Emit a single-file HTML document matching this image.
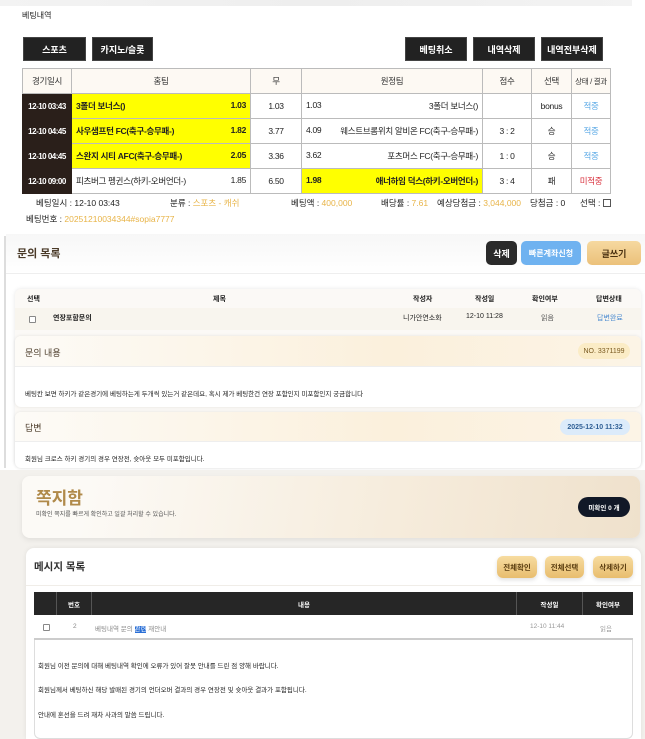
<!DOCTYPE html><html><head><meta charset="utf-8"><style>
*{margin:0;padding:0;box-sizing:border-box}
body{width:645px;height:739px;position:relative;overflow:hidden;background:#fff;font-family:"Liberation Sans","Noto Sans CJK KR",sans-serif;color:#222}
.a{position:absolute}
.btn{position:absolute;background:#222;color:#fff;font-size:9px;font-weight:bold;display:flex;align-items:center;justify-content:center;border:1px solid #444}
table{border-collapse:collapse}
.t1{position:absolute;left:22px;top:68px;width:588px;font-size:8.5px;table-layout:fixed;letter-spacing:-0.3px}
.t1 td,.t1 th{border:1px solid #bbb;height:25px;padding:0 4px;white-space:nowrap;overflow:hidden}
.t1 th{background:#fdf9f3;font-weight:normal;color:#333;text-align:center;padding:0 1px}
.t1 .d{background:#2a1f1a;color:#fff;font-weight:bold;padding:0;text-align:center;border-color:#2a1f1a;font-size:8px;letter-spacing:-0.5px}
.f{display:flex;justify-content:space-between;white-space:nowrap}
.y{background:#ffff00;font-weight:bold}
.c{text-align:center}
.gold{color:#e8b448}
.gb{position:absolute;border-radius:6px;background:linear-gradient(#f7dca0,#e8bd6e);color:#5a3d10;font-size:7.5px;font-weight:bold;display:flex;align-items:center;justify-content:center;box-shadow:0 2px 4px rgba(0,0,0,.12)}
</style></head><body>
<div class="a" style="left:0;top:0;width:632px;height:6px;background:linear-gradient(90deg,#f3f3f3,#eee 50%,#f3f3f3)"></div>
<div class="a" style="left:22px;top:10px;font-size:8px">베팅내역</div>
<div class="btn" style="left:23px;top:37px;width:63px;height:24px">스포츠</div>
<div class="btn" style="left:92px;top:37px;width:61px;height:24px">카지노/슬롯</div>
<div class="btn" style="left:405px;top:37px;width:62px;height:24px">베팅취소</div>
<div class="btn" style="left:473px;top:37px;width:62px;height:24px">내역삭제</div>
<div class="btn" style="left:541px;top:37px;width:62px;height:24px">내역전부삭제</div>
<table class="t1">
<colgroup><col style="width:49px"><col style="width:179px"><col style="width:51px"><col style="width:181px"><col style="width:49px"><col style="width:40px"><col style="width:39px"></colgroup>
<tr><th>경기일시</th><th>홈팀</th><th>무</th><th>원정팀</th><th>점수</th><th>선택</th><th style="font-size:7.5px">상태 / 결과</th></tr>
<tr><td class="d">12-10 03:43</td><td class="y"><div class="f"><span>3폴더 보너스()</span><span>1.03</span></div></td><td class="c">1.03</td><td><div class="f"><span>1.03</span><span>3폴더 보너스()</span></div></td><td></td><td class="c">bonus</td><td class="c" style="color:#5aa9e6">적중</td></tr>
<tr><td class="d">12-10 04:45</td><td class="y"><div class="f"><span>사우샘프턴 FC(축구-승무패-)</span><span>1.82</span></div></td><td class="c">3.77</td><td><div class="f"><span>4.09</span><span>웨스트브롬위치 알비온 FC(축구-승무패-)</span></div></td><td class="c">3 : 2</td><td class="c">승</td><td class="c" style="color:#5aa9e6">적중</td></tr>
<tr><td class="d">12-10 04:45</td><td class="y"><div class="f"><span>스완지 시티 AFC(축구-승무패-)</span><span>2.05</span></div></td><td class="c">3.36</td><td><div class="f"><span>3.62</span><span>포츠머스 FC(축구-승무패-)</span></div></td><td class="c">1 : 0</td><td class="c">승</td><td class="c" style="color:#5aa9e6">적중</td></tr>
<tr><td class="d">12-10 09:00</td><td><div class="f"><span>피츠버그 펭귄스(하키-오버언더-)</span><span>1.85</span></div></td><td class="c">6.50</td><td class="y"><div class="f"><span>1.98</span><span>애너하임 덕스(하키-오버언더-)</span></div></td><td class="c">3 : 4</td><td class="c">패</td><td class="c" style="color:#d9333f">미적중</td></tr>
</table>
<div class="a" style="top:197px;left:36px;font-size:8.5px;white-space:nowrap">베팅일시 : 12-10 03:43</div>
<div class="a" style="top:197px;left:170px;font-size:8.5px">분류 : <span class="gold">스포츠 - 캐쉬</span></div>
<div class="a" style="top:197px;left:291px;font-size:8.5px">베팅액 : <span class="gold">400,000</span></div>
<div class="a" style="top:197px;left:381px;font-size:8.5px">배당률 : <span class="gold">7.61</span></div>
<div class="a" style="top:197px;left:437px;font-size:8.5px;white-space:nowrap">예상당첨금 : <span class="gold">3,044,000</span></div>
<div class="a" style="top:197px;left:530px;font-size:8.5px">당첨금 : 0</div>
<div class="a" style="top:197px;left:580px;font-size:8.5px">선택 : <span style="display:inline-block;width:8px;height:8px;border:1px solid #555;vertical-align:-1px"></span></div>
<div class="a" style="top:213px;left:26px;font-size:8.5px">베팅번호 : <span class="gold">20251210034344#sopia7777</span></div>

<div class="a" style="left:0;top:233px;width:645px;height:237px;background:#fff"></div>
<div class="a" style="left:4px;top:236px;width:2px;height:232px;background:#ddd"></div>
<div class="a" style="left:6px;top:234px;width:639px;height:40px;background:linear-gradient(#f7f7f7,#fff)"></div>
<div class="a" style="left:17px;top:245px;font-size:11px;font-weight:bold;color:#4a3a28">문의 목록</div>
<div class="a" style="left:486px;top:241px;width:31px;height:24px;background:#2a2a2a;color:#fff;border-radius:5px;font-size:9px;font-weight:bold;display:flex;align-items:center;justify-content:center">삭제</div>
<div class="a" style="left:521px;top:241px;width:60px;height:24px;background:#6fb2f0;color:#fff;border-radius:5px;font-size:8px;font-weight:bold;display:flex;align-items:center;justify-content:center">빠른계좌신청</div>
<div class="a" style="left:587px;top:241px;width:54px;height:24px;background:linear-gradient(#f6d9a0,#ebc17a);color:#4a3010;border-radius:5px;font-size:9px;font-weight:bold;display:flex;align-items:center;justify-content:center">글쓰기</div>
<div class="a" style="left:6px;top:273px;width:639px;height:1px;background:#eee"></div>
<div class="a" style="left:15px;top:289px;width:626px;height:178px;border-radius:6px;background:#fbf9f6;box-shadow:0 0 4px rgba(0,0,0,.1)"></div>
<div class="a" style="top:294px;left:27px;font-size:7px;font-weight:bold">선택</div>
<div class="a" style="top:294px;left:213px;font-size:7px;font-weight:bold">제목</div>
<div class="a" style="top:294px;left:413px;font-size:7px;font-weight:bold">작성자</div>
<div class="a" style="top:294px;left:475px;font-size:7px;font-weight:bold">작성일</div>
<div class="a" style="top:294px;left:532px;font-size:7px;font-weight:bold">확인여부</div>
<div class="a" style="top:294px;left:596px;font-size:7px;font-weight:bold">답변상태</div>
<div class="a" style="left:15px;top:308px;width:626px;height:22px;background:#f8f5ee"></div>
<div class="a" style="top:316px;left:29px;width:7px;height:7px;border:1px solid #888;border-radius:1px;background:#fff"></div>
<div class="a" style="top:313px;left:53px;font-size:7px;font-weight:bold">연장포함문의</div>
<div class="a" style="top:313px;left:403px;font-size:7px">니가안연소화</div>
<div class="a" style="top:313px;left:466px;font-size:7px">12-10 11:28</div>
<div class="a" style="top:313px;left:541px;font-size:7px;color:#555">읽음</div>
<div class="a" style="top:313px;left:597px;font-size:7px;color:#4a8ad0">답변완료</div>
<div class="a" style="left:15px;top:336px;width:626px;height:71px;border-radius:6px;background:#fff;box-shadow:0 0 3px rgba(0,0,0,.1)"></div>
<div class="a" style="left:15px;top:336px;width:626px;height:31px;border-radius:6px 6px 0 0;background:linear-gradient(90deg,#fdfbf7,#fbf0dc 60%,#fcf4e6);border-bottom:1px solid #eee"></div>
<div class="a" style="top:346px;left:25px;font-size:9px;color:#4a3a28">문의 내용</div>
<div class="a" style="top:343px;left:578px;width:52px;height:16px;border-radius:8px;background:#fbecc6;color:#7a5a20;font-size:7px;display:flex;align-items:center;justify-content:center">NO. 3371199</div>
<div class="a" style="top:388px;left:25px;font-size:6.5px;white-space:nowrap">베팅칸 보면 하키가 같은경기에 베팅하는게 두개씩 있는거 같은데요, 혹시 제가 베팅한건 연장 포함인지 미포함인지 궁금합니다</div>
<div class="a" style="left:15px;top:412px;width:626px;height:56px;border-radius:6px;background:#fff;box-shadow:0 0 3px rgba(0,0,0,.1)"></div>
<div class="a" style="left:15px;top:412px;width:626px;height:30px;border-radius:6px 6px 0 0;background:linear-gradient(90deg,#fdfbf7,#fbf0dc 60%,#fcf4e6);border-bottom:1px solid #eee"></div>
<div class="a" style="top:421px;left:25px;font-size:9px;color:#4a3a28">답변</div>
<div class="a" style="top:419px;left:560px;width:70px;height:16px;border-radius:8px;background:#dcebfa;color:#2f5f95;font-size:7px;font-weight:bold;display:flex;align-items:center;justify-content:center">2025-12-10 11:32</div>
<div class="a" style="top:453px;left:25px;font-size:6.5px;white-space:nowrap">회원님 크로스 하키 경기의 경우 연장전, 슛아웃 모두 미포함입니다.</div>

<div class="a" style="left:0;top:470px;width:645px;height:269px;background:#f3f1ed"></div>
<div class="a" style="left:22px;top:476px;width:618px;height:62px;border-radius:8px;background:linear-gradient(100deg,#fcfaf6 10%,#f6ecdc 60%,#efe1cc);box-shadow:0 2px 6px rgba(0,0,0,.08)"></div>
<div class="a" style="left:36px;top:490px;font-size:17px;font-weight:bold;color:#b08a4a;line-height:18px">쪽지함</div>
<div class="a" style="left:36px;top:509px;font-size:6px;color:#555;white-space:nowrap">미확인 쪽지를 빠르게 확인하고 일괄 처리할 수 있습니다.</div>
<div class="a" style="left:578px;top:497px;width:52px;height:20px;border-radius:10px;background:#111827;color:#fff;font-size:6.5px;font-weight:bold;display:flex;align-items:center;justify-content:center">미확인 0 개</div>
<div class="a" style="left:26px;top:548px;width:615px;height:191px;border-radius:8px 8px 0 0;background:#fff;box-shadow:0 0 5px rgba(0,0,0,.08)"></div>
<div class="a" style="left:26px;top:585px;width:615px;height:1px;background:#f0ede8"></div>
<div class="a" style="left:34px;top:559px;font-size:10.5px;font-weight:bold;color:#333">메시지 목록</div>
<div class="gb" style="left:497px;top:556px;width:40px;height:22px">전체확인</div>
<div class="gb" style="left:545px;top:556px;width:39px;height:22px">전체선택</div>
<div class="gb" style="left:593px;top:556px;width:40px;height:22px">삭제하기</div>
<div class="a" style="left:34px;top:592px;width:599px;height:23px;background:#262626"></div>
<div class="a" style="left:56px;top:592px;width:1px;height:23px;background:#555"></div>
<div class="a" style="left:91px;top:592px;width:1px;height:23px;background:#555"></div>
<div class="a" style="left:516px;top:592px;width:1px;height:23px;background:#555"></div>
<div class="a" style="left:582px;top:592px;width:1px;height:23px;background:#555"></div>
<div class="a" style="left:57px;top:592px;width:34px;height:23px;color:#fff;font-size:6.5px;font-weight:bold;display:flex;align-items:center;justify-content:center">번호</div>
<div class="a" style="left:92px;top:592px;width:424px;height:23px;color:#fff;font-size:6.5px;font-weight:bold;display:flex;align-items:center;justify-content:center">내용</div>
<div class="a" style="left:517px;top:592px;width:65px;height:23px;color:#fff;font-size:6.5px;font-weight:bold;display:flex;align-items:center;justify-content:center">작성일</div>
<div class="a" style="left:583px;top:592px;width:50px;height:23px;color:#fff;font-size:6.5px;font-weight:bold;display:flex;align-items:center;justify-content:center">확인여부</div>
<div class="a" style="left:43px;top:624px;width:7px;height:7px;border:1px solid #888;border-radius:1px"></div>
<div class="a" style="left:73px;top:623px;font-size:6.5px;color:#888">2</div>
<div class="a" style="left:95px;top:623px;font-size:6.5px;color:#888;white-space:nowrap">베팅내역 문의 <span style="background:#2a6fd6;color:#fff">관련</span> 재안내</div>
<div class="a" style="left:530px;top:623px;font-size:6.5px;color:#999">12-10 11:44</div>
<div class="a" style="left:600px;top:623px;font-size:6.5px;color:#999">읽음</div>
<div class="a" style="left:34px;top:638px;width:599px;height:2px;background:#ccc"></div>
<div class="a" style="left:34px;top:640px;width:599px;height:99px;border:1px solid #ddd;border-top:none;border-radius:0 0 6px 6px;background:#fff"></div>
<div class="a" style="left:38px;top:660px;font-size:6.5px;white-space:nowrap">회원님 이전 문의에 대해 베팅내역 확인에 오류가 있어 잘못 안내를 드린 점 양해 바랍니다.</div>
<div class="a" style="left:38px;top:684px;font-size:6.5px;white-space:nowrap">회원님께서 베팅하신 해당 발매된 경기의 언더오버 결과의 경우 연장전 및 슛아웃 결과가 포함됩니다.</div>
<div class="a" style="left:38px;top:709px;font-size:6.5px;white-space:nowrap">안내에 혼선을 드려 재차 사과의 말씀 드립니다.</div>
</body></html>
